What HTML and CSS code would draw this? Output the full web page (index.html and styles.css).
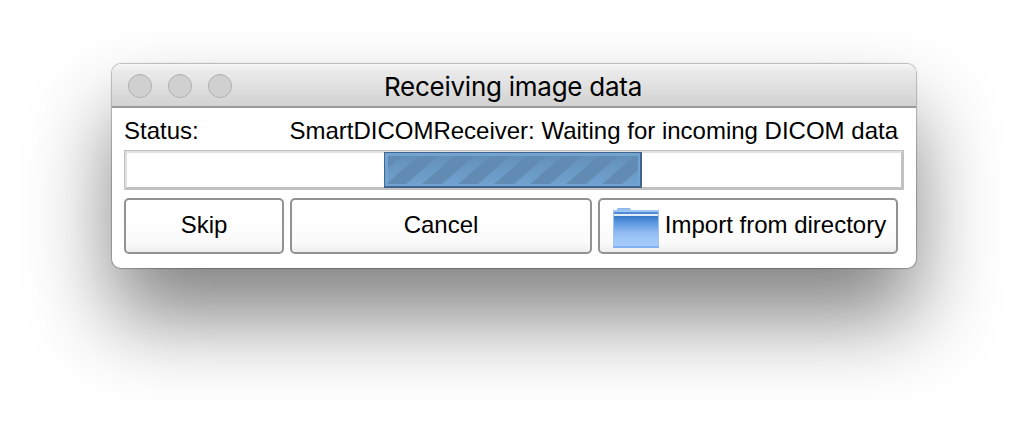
FILE: index.html
```html
<!DOCTYPE html>
<html lang="en">
<head>
<meta charset="utf-8">
<title>Receiving image data</title>
<link rel="stylesheet" href="styles.css">
</head>
<body>
<main class="window">
  <header class="titlebar">
    <div class="controls"><span class="dot"></span><span class="dot"></span><span class="dot"></span></div>
    <h1 class="title">Receiving image data</h1>
  </header>
  <section class="content">
    <div class="status"><span>Status:</span><span class="message">SmartDICOMReceiver: Waiting for incoming DICOM data</span></div>
    <div class="progress"><div class="track"><div class="chunk">
      <svg width="250" height="28" viewBox="0 0 250 28">
        <defs>
          <linearGradient id="base" x1="0" y1="0" x2="0" y2="1"><stop offset="0" stop-color="#6390b9"/><stop offset="1" stop-color="#6fa1cf"/></linearGradient>
          <pattern id="stripes" width="36" height="28" patternUnits="userSpaceOnUse"><path d="M-2 28H18L50 0H30ZM-38 28H-18L14 0H-6ZM34 28H54L86 0H66Z" fill="#618bb3"/></pattern>
        </defs>
        <rect width="250" height="28" fill="url(#base)"/>
        <rect width="250" height="28" fill="url(#stripes)"/>
      </svg>
    </div></div></div>
    <div class="actions">
      <button class="button">Skip</button>
      <button class="button">Cancel</button>
      <button class="button import">
        <svg class="folder" width="48" height="42" viewBox="0 0 48 42">
          <defs><linearGradient id="front" x1="0" y1="0" x2="0" y2="1"><stop offset="0" stop-color="#3676c7"/><stop offset=".2" stop-color="#5795de"/><stop offset=".5" stop-color="#89b5ef"/><stop offset=".7" stop-color="#9dc4f8"/><stop offset="1" stop-color="#a5ccfc"/></linearGradient></defs>
          <path d="M5 4V2Q5 1 7 1H17Q19 1 19 3V4Z" fill="#91bbed"/>
          <rect x="1" y="3" width="46" height="37" fill="#9fc5f2"/>
          <rect x="2" y="5" width="44" height="2" fill="#4e8ad7"/>
          <rect x="2" y="7" width="44" height="2" fill="#e2edf8"/>
          <rect x="2" y="9" width="44" height="30" fill="url(#front)"/>
          <rect x="1" y="39" width="46" height="2" fill="#82b1f0"/>
        </svg>
        <span>Import from directory</span>
      </button>
    </div>
  </section>
</main>
</body>
</html>
```
FILE: styles.css
```css
* { box-sizing: border-box; }
body { margin: 0; height: 428px; padding: 64px 112px; background: #fff; overflow: hidden; font: 24px/28px "Liberation Sans", Arial, sans-serif; color: #000; }
.window { width: 804px; height: 204px; border-radius: 9px; background: #fff; overflow: hidden; box-shadow: 0 0 1px 1px rgba(0,0,0,.25), 0 50px 84px rgba(0,0,0,.49); }
.titlebar { display: grid; grid-template-columns: 1fr auto 1fr; align-items: center; height: 44px; padding: 0 16px; border-bottom: 2px solid #999; background: linear-gradient(#f7f7f7, #ebebeb 15%, #d2d2d2); }
.controls { display: flex; gap: 16px; padding-top: 2px; }
.dot { width: 24px; height: 24px; border: 1px solid #b0b0b0; border-radius: 50%; background: #d0d0d0; }
.title { margin: 0; font: 400 26px/32px Inter, sans-serif; letter-spacing: -.25px; padding-top: 3px; margin-left: -2px; }
.content { padding: 9px 12px 0; }
.status { display: flex; justify-content: space-between; width: 774px; height: 28px; white-space: nowrap; }
.progress { width: 780px; height: 40px; margin-top: 5px; border: 1px solid #c1c1c1; }
.track { display: flex; height: 38px; border: 2px solid #c1c1c1; border-top-color: #e0e0e0; border-left-color: #e0e0e0; }
.chunk { width: 258px; height: 36px; margin: -1px 0 0 257px; padding: 3px; border: solid #41658c; border-width: 1px 2px 2px 1px; background: #71a3d3; }
.chunk svg { display: block; }
.actions { display: grid; grid-template-columns: 160px 302px 300px; gap: 6px; margin-top: 8px; }
.button { display: flex; align-items: center; justify-content: center; height: 56px; padding: 0 0 2px; border: 2px solid #929292; border-radius: 5px; background: linear-gradient(#fff 35%, #f9f9f9 85%, #ededed); font: inherit; color: inherit; }
.import { padding-left: 2px; }
.folder { margin-right: 5px; margin-top: 5px; }
```
